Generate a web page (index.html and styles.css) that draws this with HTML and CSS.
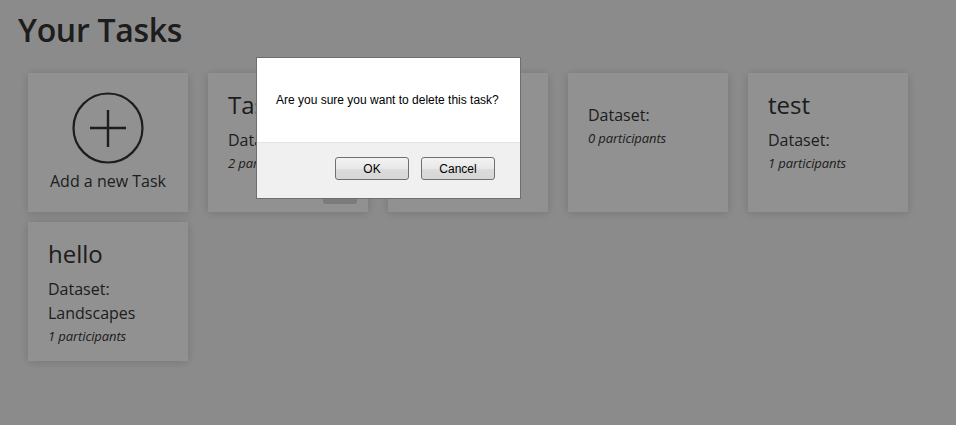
FILE: index.html
```html
<!DOCTYPE html>
<html>
<head>
<meta charset="utf-8">
<link rel="stylesheet" href="styles.css">
</head>
<body>
<main class="page">
  <h1 class="page-title">Your Tasks</h1>
  <div class="grid">
    <div class="card add-card">
      <svg class="add-icon" width="72" height="72" viewBox="0 0 72 72">
        <circle cx="36" cy="36" r="34.5" fill="none" stroke="#333" stroke-width="2.2"/>
        <path d="M18 36 H54 M36 18 V55" stroke="#333" stroke-width="2.4" fill="none"/>
      </svg>
      <div class="add-label">Add a new Task</div>
    </div>
    <div class="card">
      <h2 class="card-title">Task</h2>
      <div class="card-line">Dataset:</div>
      <div class="card-meta">2 participants</div>
      <button class="card-delete" title="Delete"></button>
    </div>
    <div class="card">
      <h2 class="card-title">Task</h2>
      <div class="card-line">Dataset:</div>
      <div class="card-meta">0 participants</div>
    </div>
    <div class="card">
      <h2 class="card-title"></h2>
      <div class="card-line">Dataset:</div>
      <div class="card-meta">0 participants</div>
    </div>
    <div class="card">
      <h2 class="card-title">test</h2>
      <div class="card-line">Dataset:</div>
      <div class="card-meta">1 participants</div>
    </div>
    <div class="card">
      <h2 class="card-title">hello</h2>
      <div class="card-line">Dataset:</div>
      <div class="card-line">Landscapes</div>
      <div class="card-meta">1 participants</div>
    </div>
  </div>
</main>
<div class="overlay"></div>
<div class="dialog">
  <div class="dialog-body">Are you sure you want to delete this task?</div>
  <div class="dialog-footer">
    <button class="dialog-btn">OK</button>
    <button class="dialog-btn">Cancel</button>
  </div>
</div>
</body>
</html>
```
FILE: styles.css
```css
html, body {
  margin: 0;
  padding: 0;
  height: 100%;
}
body {
  background: #f5f5f5;
  font-family: "Open Sans", "Lato", sans-serif;
  color: #363636;
  overflow: hidden;
}
.page {
  padding: 10px 0 0 18px;
}
.page-title {
  margin: 0;
  font-size: 32px;
  font-weight: 600;
  line-height: 40px;
  color: #333;
  letter-spacing: -0.3px;
}
.grid {
  display: grid;
  grid-template-columns: repeat(5, 160px);
  grid-auto-rows: 139px;
  column-gap: 20px;
  row-gap: 10px;
  margin: 23px 0 0 10px;
}
.card {
  position: relative;
  background: #ffffff;
  box-shadow: 0 1px 9px rgba(0, 0, 0, 0.16);
  padding: 19px 20px 0 20px;
  box-sizing: border-box;
  display: flex;
  flex-direction: column;
}
.card-title {
  margin: 0 0 11px 0;
  font-size: 24px;
  font-weight: 400;
  line-height: 25px;
  color: #333;
}
.card-line {
  font-size: 16px;
  line-height: 24px;
}
.card-meta {
  font-size: 13px;
  font-style: italic;
  line-height: 22px;
  letter-spacing: -0.1px;
}
.card-delete {
  position: absolute;
  right: 11px;
  bottom: 8px;
  width: 34px;
  height: 22px;
  border: none;
  border-radius: 3px;
  background: #d9d9d9;
}
.add-card {
  align-items: center;
  padding: 19px 0 0 0;
}
.add-icon {
  display: block;
}
.add-label {
  margin-top: 7px;
  font-size: 16px;
  line-height: 20px;
}
.overlay {
  position: fixed;
  inset: 0;
  background: rgba(0, 0, 0, 0.43);
}
.dialog {
  position: fixed;
  left: 256px;
  top: 57px;
  width: 265px;
  height: 142px;
  box-sizing: border-box;
  border: 1px solid #6e6e6e;
  background: #f0f0f0;
  font-family: "Liberation Sans", Arial, sans-serif;
  font-size: 12px;
  color: #000;
  display: flex;
  flex-direction: column;
}
.dialog-body {
  background: #fff;
  height: 85px;
  box-sizing: border-box;
  padding: 35px 0 0 19px;
  border-bottom: 1px solid #e4e4e4;
}
.dialog-footer {
  display: flex;
  justify-content: flex-end;
  gap: 12px;
  padding: 14px 25px 0 0;
}
.dialog-btn {
  width: 74px;
  height: 23px;
  border: 1px solid #707070;
  border-radius: 3px;
  background: linear-gradient(#f3f3f3, #e8e8e8 50%, #dcdcdc 51%, #d6d6d6);
  font-family: "Liberation Sans", Arial, sans-serif;
  font-size: 12px;
  color: #000;
  padding: 0;
}
```
